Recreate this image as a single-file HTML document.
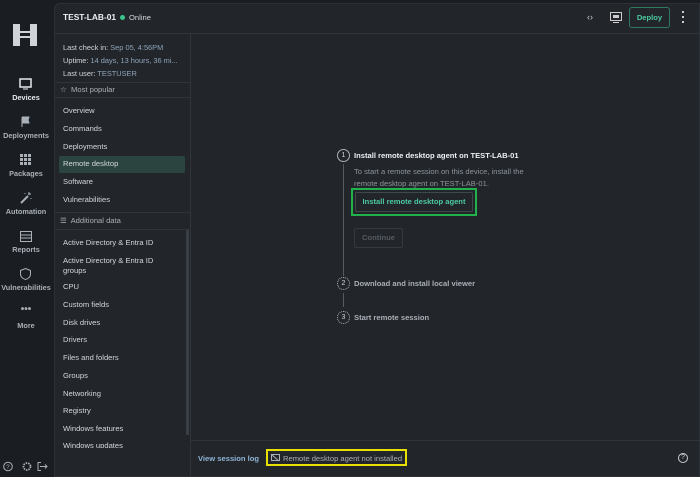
<!DOCTYPE html><html><head><style>
*{margin:0;padding:0;box-sizing:border-box}
body{width:700px;height:477px;background:#1a1e23;font-family:"Liberation Sans",sans-serif;font-size:7.6px;color:#d3d7dc;position:relative;overflow:hidden}
.a{position:absolute}
.nav{left:0;top:0;width:52px;height:477px;text-align:center;color:#aab0b7}
.ni{position:absolute;left:0;width:52px;font-size:7.3px;font-weight:bold}
.panel{left:54px;top:3px;width:646px;height:474px;background:#22262b;border-radius:6px 0 0 0;border:1px solid #2c3137}
.it{position:absolute;left:63px;font-size:7.6px;color:#d3d7dc}
.mut{color:#8fa3b8}
</style></head><body>
<div class="a nav">
<div class="a" style="left:13px;top:24px;width:24px;height:22px">
<svg width="24" height="22" viewBox="0 0 24 22"><path d="M0 0h7v7h10V0h7v22h-7v-8H7v8H0z M7 9h10v3H7z" fill="#d0d4d8" fill-rule="evenodd"/></svg></div>
<svg class="a" style="left:19px;top:78px" width="13" height="12"><rect x="1" y="1" width="11" height="8" fill="none" stroke="#e6e9ec" stroke-width="1.5"/><path d="M4 11h5" stroke="#e6e9ec"/></svg>
<div class="ni" style="top:93px;color:#e6e9ec">Devices</div>
<svg class="a" style="left:21px;top:116px" width="10" height="12"><path d="M1 1v10M1 1h7l-1 3 1 3H1" fill="#aab0b7" stroke="#aab0b7"/></svg>
<div class="ni" style="top:131px">Deployments</div>
<svg class="a" style="left:20px;top:154px" width="11" height="11"><g fill="#aab0b7"><rect x="0" y="0" width="3" height="3"/><rect x="4" y="0" width="3" height="3"/><rect x="8" y="0" width="3" height="3"/><rect x="0" y="4" width="3" height="3"/><rect x="4" y="4" width="3" height="3"/><rect x="8" y="4" width="3" height="3"/><rect x="0" y="8" width="3" height="3"/><rect x="4" y="8" width="3" height="3"/><rect x="8" y="8" width="3" height="3"/></g></svg>
<div class="ni" style="top:169px">Packages</div>
<svg class="a" style="left:20px;top:192px" width="12" height="12"><path d="M1 11L8 4" stroke="#aab0b7" stroke-width="2"/><path d="M9 0v3M11 2H8M5 1v1M11 6v1" stroke="#aab0b7"/></svg>
<div class="ni" style="top:207px">Automation</div>
<svg class="a" style="left:20px;top:231px" width="12" height="11"><rect x="0.5" y="0.5" width="11" height="10" fill="none" stroke="#aab0b7"/><path d="M0 4h12M0 7h12" stroke="#aab0b7"/></svg>
<div class="ni" style="top:245px">Reports</div>
<svg class="a" style="left:20px;top:268px" width="11" height="12"><path d="M5.5 0.5L10.5 2.5V6c0 3-2.5 5-5 5.5C3 11 0.5 9 0.5 6V2.5z" fill="none" stroke="#aab0b7"/></svg>
<div class="ni" style="top:283px">Vulnerabilities</div>
<div class="ni" style="top:304px;font-size:10px">•••</div>
<div class="ni" style="top:321px">More</div>
<svg class="a" style="left:3px;top:461px" width="46" height="11"><circle cx="5" cy="5.5" r="4.3" fill="none" stroke="#aab0b7"/><text x="3.3" y="8" font-size="6" fill="#aab0b7" font-family="Liberation Sans">?</text><circle cx="24" cy="5.5" r="3.5" fill="none" stroke="#aab0b7" stroke-width="1.8" stroke-dasharray="1.5 1"/><path d="M38 1.5h-3v8h3M37 5.5h7M42 3.5l2 2-2 2" fill="none" stroke="#aab0b7"/></svg>
</div>
<div class="a panel"></div>
<div class="a" style="left:55px;top:33px;width:645px;border-top:1px solid #2f353b"></div>
<div class="a" style="left:190px;top:33px;height:444px;border-left:1px solid #2f353b"></div>
<div class="a" style="left:63px;top:12px;font-size:8.4px;font-weight:bold;color:#eef0f2">TEST-LAB-01</div>
<div class="a" style="left:120px;top:15px;width:5px;height:5px;border-radius:50%;background:#3cc38a"></div>
<div class="a" style="left:129px;top:13px;font-size:7.6px">Online</div>
<div class="a" style="left:587px;top:12px;font-size:9px;color:#ccc">‹›</div>
<svg class="a" style="left:610px;top:12px" width="12" height="11"><rect x="0.5" y="0.5" width="11" height="8" fill="none" stroke="#ccc"/><rect x="3" y="3" width="6" height="3" fill="#ccc"/><path d="M3 10.5h6" stroke="#ccc"/></svg>
<div class="a" style="left:629px;top:7px;width:41px;height:21px;border:1px solid #2f7a5f;border-radius:3px;color:#4cc9a0;font-weight:bold;font-size:7.6px;text-align:center;line-height:19px">Deploy</div>
<div class="a" style="left:682px;top:11px;width:2px;height:12px;background:repeating-linear-gradient(#ccc 0 2px,transparent 2px 5px)"></div>
<div class="a" style="left:63px;top:41px;line-height:13px;font-size:7.4px">Last check in: <span class="mut">Sep 05, 4:56PM</span><br>Uptime: <span class="mut">14 days, 13 hours, 36 mi...</span><br>Last user: <span class="mut">TESTUSER</span></div>
<div class="a" style="left:55px;top:82px;width:135px;border-top:1px solid #2f353b"></div>
<div class="a" style="left:60px;top:85px;font-size:7.6px;color:#aab0b7">☆&nbsp; Most popular</div>
<div class="a" style="left:55px;top:97px;width:135px;border-top:1px solid #2f353b"></div>
<div class="a" style="left:59px;top:156px;width:126px;height:17px;background:#2c4440;border-radius:2px"></div>
<div class="it" style="top:106px">Overview</div>
<div class="it" style="top:124px">Commands</div>
<div class="it" style="top:142px">Deployments</div>
<div class="it" style="top:159px">Remote desktop</div>
<div class="it" style="top:177px">Software</div>
<div class="it" style="top:195px">Vulnerabilities</div>
<div class="a" style="left:55px;top:212px;width:135px;border-top:1px solid #2f353b"></div>
<div class="a" style="left:60px;top:216px;font-size:7.6px;color:#aab0b7">☰&nbsp; Additional data</div>
<div class="a" style="left:55px;top:229px;width:135px;border-top:1px solid #2f353b"></div>
<div class="a" style="left:186px;top:230px;width:3px;height:205px;background:#3a3f45"></div>
<div class="it" style="top:238px">Active Directory &amp; Entra ID</div>
<div class="it" style="top:256px;line-height:10px">Active Directory &amp; Entra ID<br>groups</div>
<div class="it" style="top:282px">CPU</div>
<div class="it" style="top:300px">Custom fields</div>
<div class="it" style="top:318px">Disk drives</div>
<div class="it" style="top:335px">Drivers</div>
<div class="it" style="top:353px">Files and folders</div>
<div class="it" style="top:371px">Groups</div>
<div class="it" style="top:389px">Networking</div>
<div class="it" style="top:406px">Registry</div>
<div class="it" style="top:424px">Windows features</div>
<div class="it" style="top:441px;height:7px;overflow:hidden">Windows updates</div>
<div class="a" style="left:191px;top:440px;width:509px;border-top:1px solid #2f353b"></div>
<div class="a" style="left:198px;top:454px;font-weight:bold;color:#8fb4d6">View session log</div>
<div class="a" style="left:266px;top:449px;width:141px;height:17px;border:2px solid #e8e000"></div>
<svg class="a" style="left:271px;top:454px" width="9" height="8"><rect x="0.5" y="0.5" width="8" height="6" fill="none" stroke="#aab0b7"/><path d="M1 1l7 6" stroke="#aab0b7"/></svg>
<div class="a" style="left:283px;top:454px;color:#aab0b7">Remote desktop agent not installed</div>
<div class="a" style="left:678px;top:453px;width:10px;height:10px;border:1px solid #ccc;border-radius:50%;font-size:7px;text-align:center;line-height:8px">?</div>
<div class="a" style="left:337px;top:149px;width:13px;height:13px;border:1px solid #aab0b7;border-radius:50%;font-size:7px;text-align:center;line-height:11px">1</div>
<div class="a" style="left:343px;top:164px;height:112px;border-left:1px solid #555b62"></div>
<div class="a" style="left:354px;top:151px;font-weight:bold;color:#eef0f2">Install remote desktop agent on TEST-LAB-01</div>
<div class="a" style="left:354px;top:166px;color:#8c939b;line-height:12px">To start a remote session on this device, install the<br>remote desktop agent on TEST-LAB-01.</div>
<div class="a" style="left:351px;top:188px;width:126px;height:28px;border:2px solid #22b24c"></div>
<div class="a" style="left:355px;top:192px;width:118px;height:20px;border:1px solid #3d4a48;border-radius:2px;color:#4cc9a0;font-weight:bold;text-align:center;line-height:18px">Install remote desktop agent</div>
<div class="a" style="left:354px;top:228px;width:49px;height:20px;border:1px solid #343a40;border-radius:2px;color:#555b62;font-weight:bold;text-align:center;line-height:18px">Continue</div>
<div class="a" style="left:337px;top:277px;width:13px;height:13px;border:1px dotted #aab0b7;border-radius:50%;font-size:7px;text-align:center;line-height:11px">2</div>
<div class="a" style="left:354px;top:279px;font-weight:bold;color:#aab0b7">Download and install local viewer</div>
<div class="a" style="left:343px;top:293px;height:14px;border-left:1px solid #555b62"></div>
<div class="a" style="left:337px;top:311px;width:13px;height:13px;border:1px dotted #aab0b7;border-radius:50%;font-size:7px;text-align:center;line-height:11px">3</div>
<div class="a" style="left:354px;top:313px;font-weight:bold;color:#aab0b7">Start remote session</div>
</body></html>
